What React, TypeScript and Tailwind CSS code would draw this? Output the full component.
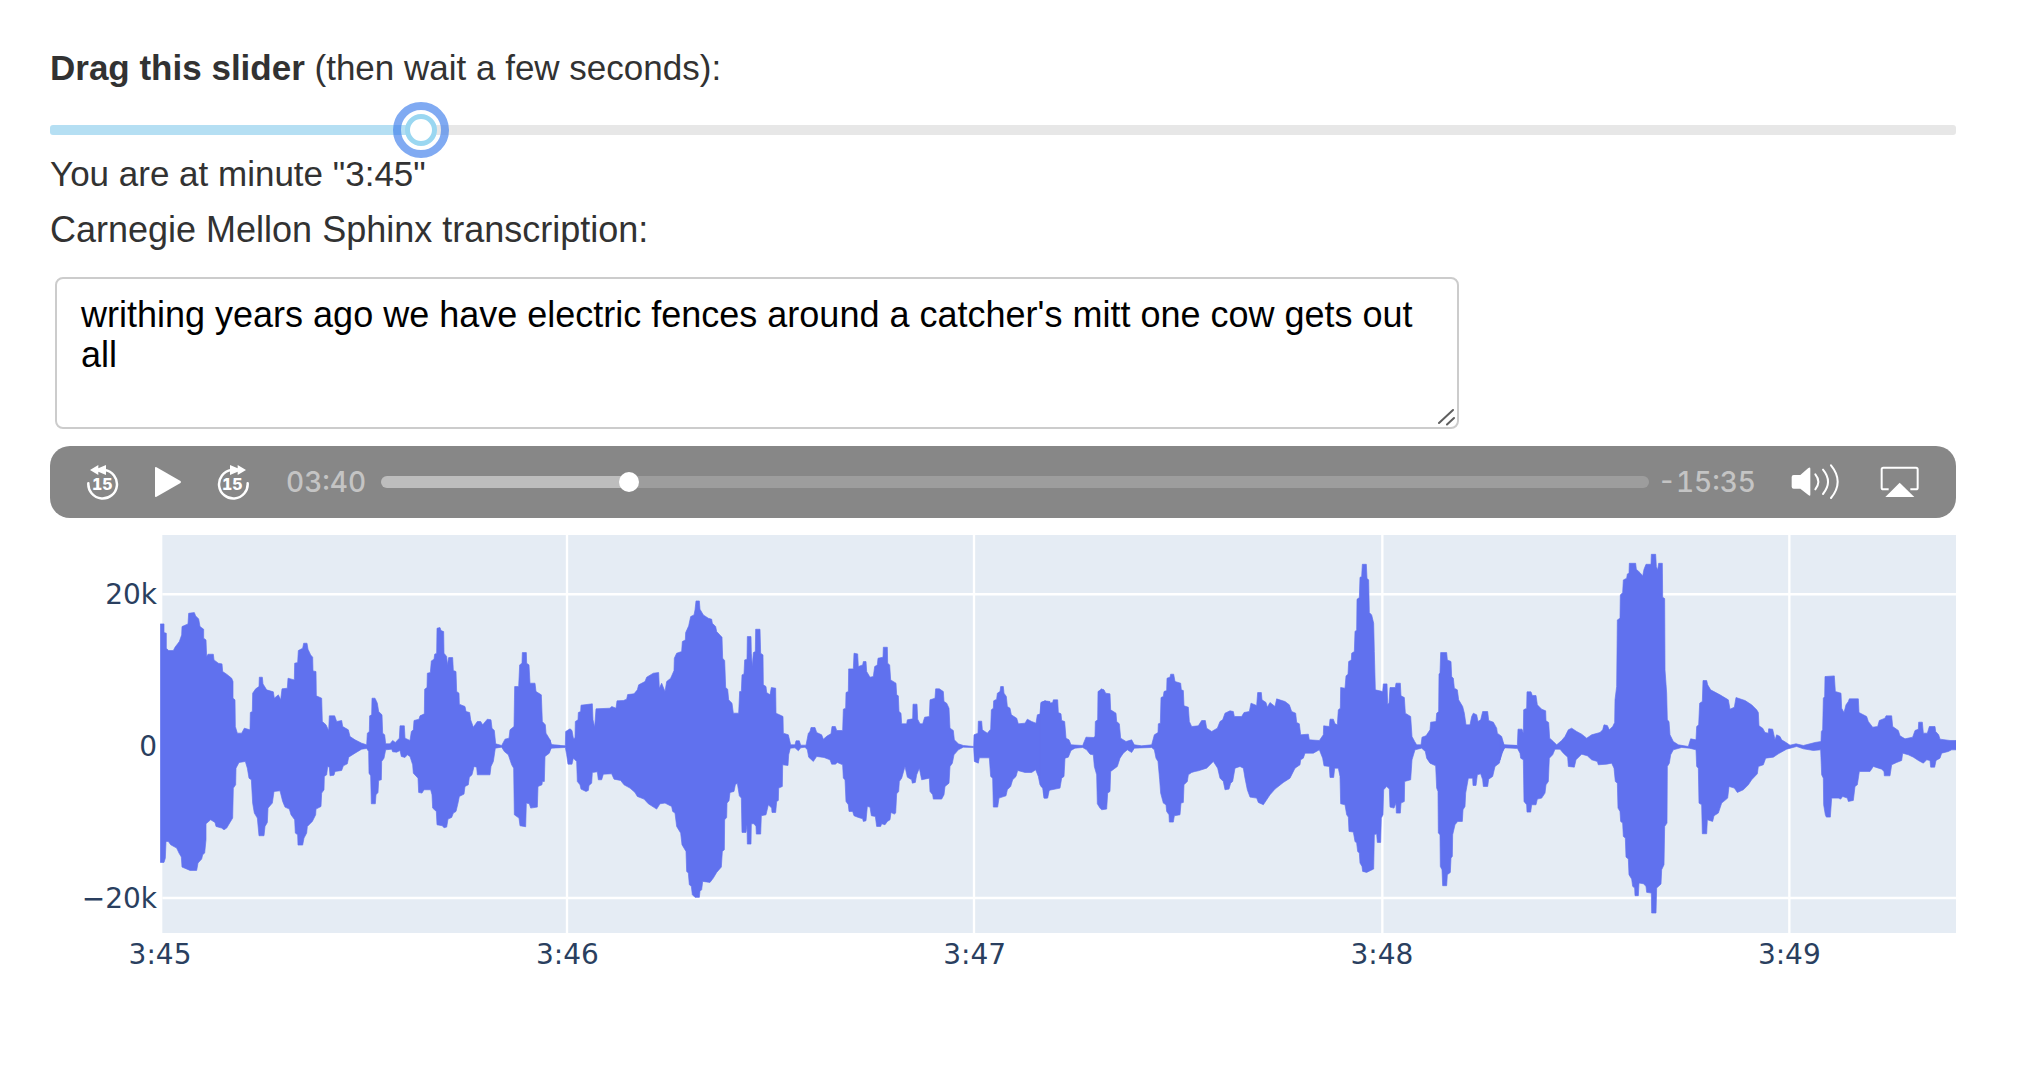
import React, { useState } from "react";

type Segment = { offset: number; top: string; bottom: string };

// Upper and lower envelopes of the audio signal, left to right, in chart units.
const SEGMENTS: Segment[] = [
  {
    offset: -300,
    top: "301,312 312,312 312,338 319,340 319,385 326,392 340,392 345,382 358,365 365,345 366,320 384,312 386,280 403,278 407,288 416,297 420,320 431,328 431,355 438,360 440,410 444,403 460,403 462,420 475,430 486,432 488,455 500,463 515,475 519,485 519,535 525,540 526,620 532,640 545,640 553,625 570,630 571,578 577,575 578,520 587,507 597,500 598,472 607,472 609,492 620,510 640,516 643,535 655,525 662,540 666,507 682,505 684,475 703,480 704,430 713,428 715,392 728,385 731,370 741,370 744,388 752,405 758,412 759,453 768,455 769,528 785,535 787,605 798,615 806,632 808,588 824,588 830,605 845,602 848,620 865,630 870,650 885,660 905,670 920,675 922,640 928,635 929,588 935,585 936,535 945,535 952,550 956,575 966,585 968,640 974,645 977,672 990,672 998,662 1006,668 1018,655 1020,618 1033,618 1035,655 1050,662 1054,635 1060,630 1062,602 1077,598 1080,588 1093,582 1094,508 1101,503 1102,460 1111,458 1114,423 1122,418 1124,403 1130,400 1131,325 1140,323 1143,332 1151,335 1152,400 1160,410 1162,435 1166,413 1178,413 1180,452 1188,455 1190,515 1197,520 1198,553 1215,560 1218,575 1229,578 1232,600 1240,622 1252,605 1262,605 1268,615 1282,598 1293,600 1296,625 1303,632 1307,672 1325,677 1335,658 1347,655 1350,630 1362,620 1364,500 1376,500 1379,435 1386,430 1387,398 1399,398 1400,430 1407,435 1410,490 1425,490 1428,515 1444,525 1447,605 1456,615 1458,640 1470,660 1474,675 1500,677",
    bottom: "301,1028 312,1028 316,1015 318,965 325,965 332,975 350,985 357,1000 364,1012 366,1042 390,1052 410,1052 414,1030 425,1018 428,1005 434,1000 438,960 438,912 452,900 465,908 468,920 485,925 492,930 500,925 510,908 518,895 520,805 527,795 528,745 537,728 556,725 562,745 567,775 574,780 578,850 583,880 592,895 597,948 612,948 615,920 622,908 624,865 637,850 642,815 660,813 668,845 675,862 688,868 693,885 704,900 706,940 713,945 714,976 728,976 732,955 740,940 742,920 757,905 767,885 768,868 783,860 785,820 792,810 793,770 800,765 803,740 808,742 810,768 822,766 825,755 845,752 850,738 862,732 866,712 885,700 905,688 920,686 926,695 927,760 932,768 934,852 946,852 948,825 954,818 956,782 964,780 965,725 972,715 977,690 995,688 998,696 1010,697 1020,692 1024,710 1035,713 1042,705 1050,710 1058,735 1060,760 1074,775 1076,818 1086,820 1092,810 1112,810 1116,825 1118,865 1129,875 1131,915 1147,918 1152,924 1160,922 1164,898 1175,893 1180,880 1188,875 1194,850 1198,830 1212,823 1215,800 1225,795 1228,772 1236,765 1242,740 1250,742 1252,765 1290,765 1293,740 1300,725 1306,685 1325,682 1333,695 1345,705 1355,735 1361,745 1363,885 1377,895 1380,918 1397,921 1399,850 1408,852 1412,865 1432,862 1434,800 1446,795 1447,785 1453,785 1455,710 1468,700 1474,683 1500,682",
  },
  {
    offset: 1170,
    top: "0,660 4,675 46,678 47,635 60,627 66,632 70,655 75,655 76,605 84,600 85,578 92,575 93,556 127,552 129,600 134,622 138,567 180,565 185,560 198,565 201,543 220,542 230,538 233,524 252,522 262,510 266,495 285,485 290,472 310,460 326,458 328,505 335,490 345,515 350,485 362,475 372,452 373,415 380,400 395,395 397,365 406,360 407,338 416,318 422,290 432,285 435,270 438,243 448,243 450,268 460,285 475,295 485,298 487,310 497,320 500,335 516,352 518,415 524,422 527,503 533,508 536,540 546,550 550,580 566,580 569,515 574,515 576,465 582,462 584,420 591,418 592,350 603,350 604,400 607,440 610,398 616,395 617,328 630,328 632,400 639,405 640,495 648,500 650,518 660,525 664,503 677,505 678,580 695,588 699,590 700,640 715,645 722,675 735,675 738,663 748,663 752,676 768,676 775,640 780,635 783,623 795,623 800,638 815,645 820,658 832,648 843,642 846,620 856,620 860,632 878,632 880,568 887,565 888,518 895,515 896,447 910,447 912,400 923,402 925,440 938,435 940,425 948,425 950,455 960,472 970,470 974,440 982,435 984,415 999,412 1000,382 1012,382 1013,430 1019,435 1022,480 1038,490 1040,525 1045,528 1047,575 1053,580 1055,612 1070,612 1072,600 1088,597 1089,553 1101,553 1103,598 1110,612 1118,612 1124,592 1138,590 1140,540 1155,535 1157,507 1168,507 1180,515 1182,545 1190,550 1197,565 1200,625 1210,632 1213,660 1225,672 1240,677 1271,680 1272,645 1284,640 1285,604 1295,604 1297,630 1312,640 1322,628 1324,570 1330,565 1331,543 1340,538 1342,520 1350,515 1352,500 1360,500 1362,520 1369,530 1372,560 1380,565 1384,585 1400,595 1405,612 1425,610 1432,598 1445,605 1458,610 1462,585 1472,582 1473,548 1485,543 1500,545",
    bottom: "0,690 4,685 46,683 50,705 54,733 66,733 70,715 80,725 82,785 90,795 93,808 108,815 115,812 117,797 125,790 127,758 142,756 145,780 155,780 160,763 185,762 192,778 212,782 222,795 240,805 255,818 262,830 282,838 295,852 320,868 330,852 345,850 365,860 368,875 375,880 380,920 392,940 396,975 408,995 410,1055 415,1060 418,1095 424,1100 427,1125 435,1133 448,1133 450,1115 455,1110 458,1085 480,1088 490,1075 500,1058 514,1042 517,995 523,990 524,900 530,893 531,850 537,843 540,818 552,815 556,795 562,790 568,828 574,835 576,938 588,938 591,915 592,973 603,973 604,912 612,912 618,920 619,943 632,943 634,888 648,885 655,855 665,865 666,878 677,878 680,845 685,842 686,805 697,800 698,735 714,737 716,705 721,685 735,684 745,693 752,684 765,682 772,690 776,712 790,725 800,710 822,713 840,720 845,733 856,733 862,728 878,735 880,775 885,780 888,845 895,855 897,875 908,875 912,888 925,893 938,897 940,905 948,903 952,860 960,862 964,888 976,890 980,920 992,920 995,912 1005,915 1012,905 1020,900 1023,878 1033,883 1037,880 1040,822 1046,815 1048,785 1055,775 1065,740 1072,772 1085,780 1087,790 1096,788 1100,765 1108,745 1115,780 1138,775 1140,815 1148,825 1150,838 1175,838 1182,825 1185,800 1197,790 1200,740 1207,730 1212,705 1225,690 1240,682 1271,683 1273,725 1285,730 1288,714 1318,714 1322,770 1328,775 1330,862 1343,862 1347,835 1368,828 1372,810 1382,800 1388,780 1398,770 1403,752 1425,758 1445,758 1457,750 1465,770 1470,795 1480,805 1483,835 1493,835 1500,800",
  },
  {
    offset: 2640,
    top: "0,580 3,548 15,543 28,550 38,548 40,540 53,540 55,578 63,582 65,602 74,605 78,655 87,660 93,675 128,677 138,652 160,653 165,650 166,605 173,600 174,515 182,510 183,507 192,510 197,520 210,522 212,570 228,580 230,605 238,612 242,655 258,665 275,660 283,675 305,678 335,675 343,645 354,638 355,612 361,610 363,533 370,530 372,515 380,512 381,475 390,472 392,463 401,463 405,485 422,490 424,510 430,512 432,558 445,562 448,605 455,620 475,618 485,602 496,602 500,625 515,635 532,625 540,605 548,600 555,580 570,573 580,575 583,590 605,590 612,578 628,575 633,550 650,557 653,518 664,518 666,540 678,548 682,562 690,548 705,560 710,537 735,545 748,555 755,575 767,580 770,608 778,612 782,645 805,643 808,660 838,662 850,645 851,618 868,620 870,598 880,598 885,612 892,615 895,570 901,565 902,503 915,505 918,468 924,463 926,425 934,420 935,400 943,395 945,335 950,330 951,238 958,233 960,172 965,170 967,133 979,133 981,175 986,180 988,278 995,285 1001,310 1003,395 1006,510 1028,515 1030,492 1041,492 1043,553 1047,550 1050,503 1066,503 1068,490 1081,490 1083,528 1093,533 1096,580 1112,590 1116,650 1124,665 1130,675 1143,675 1146,652 1158,648 1170,630 1172,607 1188,605 1190,580 1196,575 1197,462 1200,460 1202,398 1220,398 1222,420 1233,425 1235,470 1240,475 1243,505 1252,510 1256,540 1268,560 1273,580 1278,615 1290,615 1295,590 1300,580 1310,585 1314,605 1322,600 1328,575 1343,575 1346,602 1360,607 1370,625 1372,640 1385,650 1392,675 1430,677",
    bottom: "0,770 3,800 8,805 12,835 20,835 25,812 60,805 65,775 72,770 75,715 85,712 93,692 105,685 128,683 140,690 150,703 160,705 163,740 170,765 172,852 180,865 185,870 200,868 203,820 210,815 212,755 232,740 240,715 250,700 262,690 275,698 283,685 335,683 343,690 348,715 354,725 359,780 362,820 370,850 378,855 380,875 387,885 388,907 400,907 403,888 420,885 423,850 430,848 432,795 442,785 445,765 455,758 465,755 475,753 500,745 520,725 533,745 540,775 550,785 555,810 567,808 572,790 578,785 585,745 600,740 610,745 615,775 622,810 630,832 650,835 655,848 670,855 690,825 705,808 730,788 750,775 765,745 780,735 782,720 790,715 795,700 820,700 838,690 848,715 852,738 868,740 870,773 881,773 884,745 895,745 900,770 902,852 915,855 920,885 925,892 927,935 940,937 945,965 950,970 953,995 958,1000 960,1030 966,1040 968,1055 980,1058 1001,1048 1003,945 1010,942 1012,968 1022,968 1024,895 1029,885 1031,810 1040,800 1048,808 1050,862 1062,865 1068,850 1069,880 1081,880 1083,850 1093,845 1094,785 1112,780 1116,720 1125,690 1145,685 1156,695 1160,715 1170,730 1187,738 1190,805 1194,815 1195,940 1200,945 1201,1040 1206,1050 1208,1098 1220,1098 1222,1065 1231,1058 1233,1015 1237,1010 1238,945 1245,915 1253,905 1267,905 1269,870 1275,860 1277,820 1285,775 1298,775 1299,797 1308,797 1312,765 1322,762 1328,780 1330,800 1343,800 1346,778 1358,770 1365,740 1378,730 1385,700 1395,683 1430,685",
  },
  {
    offset: 4020,
    top: "0,650 12,676 52,677 54,628 66,628 70,640 71,570 80,565 81,516 93,516 97,527 108,527 112,555 125,568 137,573 138,603 146,608 149,655 160,665 170,675 185,662 195,650 205,630 215,625 230,635 245,643 260,655 275,645 300,638 308,630 312,615 322,617 328,630 338,620 344,608 345,540 350,500 352,300 360,295 361,225 368,218 370,180 380,175 382,162 387,160 388,130 407,130 409,148 420,158 428,168 432,148 438,133 453,133 454,103 467,103 469,140 473,150 476,130 487,130 488,232 494,236 495,450 500,520 502,600 507,605 510,645 520,665 535,675 565,680 572,657 588,660 590,620 596,615 599,550 607,545 609,482 620,482 623,495 632,510 660,525 685,540 690,568 703,562 708,533 735,542 755,555 770,570 775,578 777,618 788,625 795,638 805,640 806,627 818,628 825,660 830,645 840,650 845,660 858,668 870,676 888,672 910,677 930,672 945,668 963,665 964,635 968,630 970,535 974,530 975,470 1003,468 1006,515 1023,520 1025,565 1032,578 1038,555 1045,545 1048,537 1075,537 1077,578 1100,590 1105,605 1118,622 1133,620 1138,602 1155,595 1158,588 1175,588 1178,620 1195,632 1200,648 1215,657 1238,652 1245,632 1255,628 1256,607 1267,607 1270,640 1282,640 1288,620 1305,620 1307,635 1316,645 1320,658 1350,662 1368,662",
    bottom: "0,720 12,684 52,685 60,700 62,715 70,720 72,845 80,855 81,877 92,877 95,855 108,855 112,838 125,835 135,820 138,795 145,785 148,715 158,705 165,688 180,688 190,700 203,712 205,740 223,742 228,720 245,703 262,708 275,720 292,725 295,735 320,733 335,730 342,745 346,785 352,790 354,865 360,875 362,905 368,910 370,950 376,955 378,1012 385,1018 387,1065 395,1078 398,1100 404,1105 405,1128 415,1128 417,1090 430,1092 438,1100 440,1118 454,1120 455,1180 468,1180 470,1105 483,1093 485,1050 492,1035 494,920 501,910 502,740 508,730 512,705 520,690 545,683 568,685 588,690 590,740 595,745 597,850 605,855 607,942 620,942 622,900 638,905 642,888 655,880 660,865 665,850 683,835 687,800 703,805 712,818 730,810 745,795 755,780 772,762 775,740 790,735 797,715 820,712 835,702 860,688 890,680 910,687 940,692 962,690 965,765 970,775 971,855 976,885 979,892 991,892 995,835 1015,835 1022,838 1028,830 1042,835 1045,845 1060,842 1065,800 1072,795 1078,755 1110,755 1120,740 1145,748 1152,755 1153,768 1170,768 1175,735 1190,728 1205,722 1208,700 1225,705 1240,712 1255,722 1270,730 1280,720 1290,722 1292,742 1304,742 1308,722 1320,715 1325,700 1345,695 1355,690 1368,690",
  },
];

const outline = (s: Segment) =>
  `${s.top} ${s.bottom.split(" ").reverse().join(" ")}`;

const GRID_X = [1221, 2442, 3667, 4888];
const TIMES = ["3:45", "3:46", "3:47", "3:48", "3:49"];

function SkipIcon({ forward = false }: { forward?: boolean }) {
  return (
    <svg viewBox="138 66 102 108" className="h-9 w-[34px]" aria-hidden="true">
      <g transform={forward ? "translate(378 0) scale(-1 1)" : undefined}>
        <path
          d="M145 124 A43 43 0 1 0 194 84"
          fill="none"
          stroke="white"
          strokeWidth="7.5"
          strokeLinecap="round"
        />
        <path d="M150 84 L175 69 V79 L198 69 V99 L175 89 V99 Z" fill="white" />
      </g>
      <text
        x="187"
        y="143"
        textAnchor="middle"
        fill="white"
        fontFamily="Inter, sans-serif"
        fontWeight="800"
        fontSize="48"
      >
        15
      </text>
    </svg>
  );
}

function Waveform() {
  return (
    <svg
      viewBox="0 0 5388 1195"
      preserveAspectRatio="none"
      className="block h-full w-full"
      role="img"
      aria-label="Audio waveform"
    >
      <rect x="7" y="0" width="5381" height="1195" fill="#e5ecf4" />
      <g stroke="white" strokeWidth="7">
        {GRID_X.map((x) => (
          <line key={x} x1={x} x2={x} y1="0" y2="1195" />
        ))}
        <line x1="7" x2="5388" y1="178" y2="178" />
        <line x1="7" x2="5388" y1="1090" y2="1090" />
      </g>
      <g fill="#6071ee" stroke="#6071ee" strokeWidth="2">
        {SEGMENTS.map((s) => (
          <polygon
            key={s.offset}
            points={outline(s)}
            transform={`translate(${s.offset} -45)`}
          />
        ))}
      </g>
    </svg>
  );
}

function Player() {
  const [position, setPosition] = useState(220);
  const fill = `calc(10px + (100% - 20px) * ${position / 1155})`;
  return (
    <div className="mt-[17px] flex h-[72px] items-center rounded-[20px] bg-[#878787] pr-9 pl-9 font-['Inter',sans-serif] text-[28px] font-medium tabular-nums text-[#c4c4c4]">
      <button type="button" aria-label="Back 15 seconds">
        <SkipIcon />
      </button>
      <button type="button" aria-label="Play" className="ml-[34px]">
        <svg viewBox="0 0 28 32" className="h-8 w-7" aria-hidden="true">
          <path
            d="M1 2 Q1 .5 2.500 1.300 L26.500 15 Q27.500 16 26.500 17 L2.500 30.700 Q1 31.500 1 30 Z"
            fill="white"
          />
        </svg>
      </button>
      <button type="button" aria-label="Forward 15 seconds" className="ml-[34px]">
        <SkipIcon forward />
      </button>
      <span className="ml-9 w-[83px] whitespace-nowrap">03:40</span>
      <input
        type="range"
        aria-label="Playback position"
        min={0}
        max={1155}
        value={position}
        onChange={(e) => setPosition(Number(e.target.value))}
        style={{
          background: `linear-gradient(to right, #bdbdbd ${fill}, #9d9d9d ${fill})`,
        }}
        className="mx-3 h-3 min-w-0 flex-1 appearance-none rounded-full [&::-webkit-slider-thumb]:h-5 [&::-webkit-slider-thumb]:w-5 [&::-webkit-slider-thumb]:appearance-none [&::-webkit-slider-thumb]:rounded-full [&::-webkit-slider-thumb]:bg-white"
      />
      <span className="flex w-[95px] justify-end whitespace-nowrap">-15:35</span>
      <button type="button" aria-label="Mute" className="ml-[35px]">
        <svg viewBox="34 70 147 108" className="h-9 w-[49px]" aria-hidden="true">
          <path
            d="M42 103 H62 L86 82 Q92 78 92 84 V162 Q92 168 86 163 L62 144 H42 Q36 144 36 138 V109 Q36 103 42 103 Z"
            fill="white"
          />
          <g fill="none" stroke="white" strokeWidth="6" strokeLinecap="round">
            <path d="M107 101 Q125 123 107 146" />
            <path d="M130 87 Q160 123 130 160" />
            <path d="M154 74 Q194 123 154 172" />
          </g>
        </svg>
      </button>
      <button type="button" aria-label="AirPlay" className="ml-10">
        <svg viewBox="300 72 120 108" className="h-9 w-10" aria-hidden="true">
          <path
            d="M326 148 H310 Q305 148 305 143 V88 Q305 83 310 83 H408 Q413 83 413 88 V143 Q413 148 408 148 H391"
            fill="none"
            stroke="white"
            strokeWidth="6"
          />
          <path d="M359 128 L403 171 H316 Z" fill="white" />
        </svg>
      </button>
    </div>
  );
}

export default function App() {
  const [second, setSecond] = useState(225);
  const [text, setText] = useState(
    "writhing years ago we have electric fences around a catcher's mitt one cow gets out all",
  );
  const fill = `calc(16px + (100% - 32px) * ${second / 1188})`;
  const minute = `${Math.floor(second / 60)}:${String(second % 60).padStart(2, "0")}`;

  return (
    <main className="min-h-screen bg-white pt-10 pr-[74px] pb-10 pl-[50px] font-['Liberation_Sans',Arial,sans-serif] text-[35px] leading-[56px] text-[#323232]">
      <label htmlFor="minute" className="block">
        <strong>Drag this slider</strong> (then wait a few seconds):
      </label>
      <div className="flex h-[50px] items-center pt-[18px]">
        <input
          id="minute"
          type="range"
          min={0}
          max={1188}
          value={second}
          onChange={(e) => setSecond(Number(e.target.value))}
          style={{
            background: `linear-gradient(to right, #b5dff3 ${fill}, #e7e7e7 ${fill})`,
          }}
          className="h-[10px] w-full appearance-none rounded-[3px] outline-none [&::-webkit-slider-thumb]:h-8 [&::-webkit-slider-thumb]:w-8 [&::-webkit-slider-thumb]:appearance-none [&::-webkit-slider-thumb]:rounded-full [&::-webkit-slider-thumb]:border-[5px] [&::-webkit-slider-thumb]:border-solid [&::-webkit-slider-thumb]:border-[#9ad7f1] [&::-webkit-slider-thumb]:bg-white [&::-webkit-slider-thumb]:[outline:8px_solid_rgba(60,125,235,0.65)] [&::-webkit-slider-thumb]:[outline-offset:4px]"
        />
      </div>
      <p>You are at minute "{minute}"</p>
      <label htmlFor="transcription" className="block text-[36px]">
        Carnegie Mellon Sphinx transcription:
      </label>
      <div className="relative mt-[19px] ml-[5px] w-[1404px] max-w-full">
        <textarea
          id="transcription"
          value={text}
          onChange={(e) => setText(e.target.value)}
          className="block h-[152px] w-full resize-none rounded-lg border-2 border-[#cccccc] bg-white px-6 py-4 text-[36px] leading-10 text-black outline-none"
        />
        <svg
          viewBox="0 0 18 18"
          className="absolute right-1 bottom-[3px] h-[18px] w-[18px]"
          aria-hidden="true"
        >
          <path
            d="M2 15 L16 2 M10 16.500 L17 10"
            stroke="#5f5f5f"
            strokeWidth="2"
            strokeLinecap="round"
            fill="none"
          />
        </svg>
      </div>
      <Player />
      <section
        aria-label="Waveform chart"
        className="mt-[17px] grid grid-cols-[110px_minmax(0,1fr)] font-['DejaVu_Sans',sans-serif] text-[28px] leading-9 text-[#2a3f5f]"
      >
        <div className="flex flex-col justify-between pt-[42px] pr-[3px] pb-4 text-right">
          <span>20k</span>
          <span>0</span>
          <span>−20k</span>
        </div>
        <div className="h-[398px]">
          <Waveform />
        </div>
        <div className="col-start-2 flex pt-1">
          {TIMES.map((t) => (
            <div key={t} className="w-[22.68%] shrink-0 last:w-0">
              <span className="flex w-0 justify-center">{t}</span>
            </div>
          ))}
        </div>
      </section>
    </main>
  );
}
